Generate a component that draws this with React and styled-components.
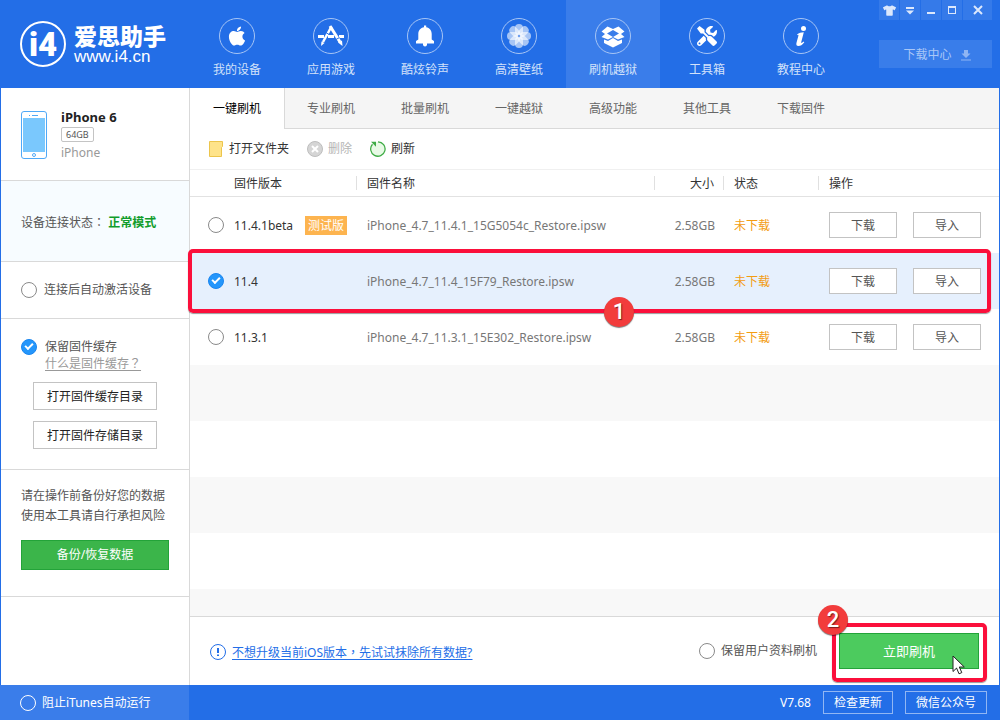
import { useState } from "react";
import styled, { createGlobalStyle } from "styled-components";
import { FaApple, FaTools, FaTshirt } from "react-icons/fa";

const GlobalStyle = createGlobalStyle`
  * {
    box-sizing: border-box;
  }

  body {
    margin: 0;
    font-family: "Noto Sans", "Noto Sans CJK SC", sans-serif;
    font-size: 12px;
    line-height: 16px;
    color: #555;
  }

  button,
  input {
    font: inherit;
    margin: 0;
  }

  button {
    padding: 0;
    cursor: pointer;
  }
`;

const Window = styled.div`
  display: flex;
  flex-direction: column;
  min-height: 100vh;
  background: #236ee7;
`;

/* header */
const Header = styled.header`
  display: flex;
  height: 88px;
`;

const Brand = styled.div`
  display: flex;
  align-items: center;
  gap: 8px;
  width: 190px;
  padding-left: 20px;
  color: #fff;
`;

const BrandName = styled.div`
  font-family: "Noto Sans CJK SC", sans-serif;
  font-size: 23px;
  font-weight: 900;
  line-height: 26px;
  white-space: nowrap;
`;

const BrandSite = styled.div`
  font-family: "Liberation Sans", sans-serif;
  font-size: 17px;
  line-height: 18px;
`;

const Nav = styled.nav`
  display: flex;
  flex: 1;
`;

const NavItem = styled.button`
  display: flex;
  flex-direction: column;
  align-items: center;
  gap: 8px;
  width: 94px;
  padding-top: 18px;
  border: none;
  background: ${(props) => (props.$active ? "#3a7dea" : "none")};
  color: #d3e2fa;
`;

const NavIcon = styled.span`
  display: flex;
  align-items: center;
  justify-content: center;
  width: 36px;
  height: 36px;
  border: 1px solid #a7c5f5;
  border-radius: 50%;
  color: #fff;
`;

const HeaderRight = styled.div`
  display: flex;
  flex-direction: column;
  gap: 20px;
  width: 113px;
  margin-right: 8px;
`;

const Controls = styled.div`
  display: flex;
  gap: 1px;
`;

const Control = styled.button`
  display: flex;
  align-items: center;
  justify-content: center;
  flex: ${(props) => (props.$wide ? "1" : "0 0 20px")};
  height: 20px;
  border: none;
  background: #357ae9;
  color: #dce8fc;
`;

const DownloadCenter = styled.button`
  display: flex;
  align-items: center;
  justify-content: center;
  gap: 8px;
  height: 28px;
  padding: 2px 0 0 4px;
  border: none;
  background: #397dea;
  color: #a9c7f7;
`;

/* sidebar */
const Body = styled.div`
  display: flex;
  flex: 1;
  padding: 0 1px;
`;

const Sidebar = styled.aside`
  display: flex;
  flex-direction: column;
  flex: 0 0 189px;
  background: #fff;
  border-right: 1px solid #d9d9d9;
`;

const Section = styled.section`
  padding: ${(props) => props.$pad || "20px"};
  border-bottom: 1px solid #d9d9d9;
  background: ${(props) => (props.$tint ? "#f7fcff" : "#fff")};
`;

const Device = styled.div`
  display: flex;
  gap: 14px;
`;

const DeviceInfo = styled.div`
  display: flex;
  flex-direction: column;
  align-items: flex-start;
  gap: 3px;
  color: #999;
`;

const DeviceName = styled.h1`
  margin: -2px 0 -1px;
  font-size: 13px;
  line-height: 16px;
  color: #222;
`;

const Capacity = styled.span`
  height: 15px;
  padding: 0 4px;
  border: 1px solid #c4c4c4;
  border-radius: 2px;
  font-size: 9px;
  line-height: 13px;
  color: #555;
`;

const Mode = styled.strong`
  color: #119c2b;
`;

/* full-width marks set in the middle of their cell */
const Punct = styled.span`
  font-family: "Noto Sans CJK TC", sans-serif;
`;

const CheckLabel = styled.label`
  display: flex;
  align-items: center;
  gap: ${(props) => props.$gap || "6px"};
  color: ${(props) => props.$color || "#555"};
`;

const RoundCheck = styled.input`
  appearance: none;
  position: relative;
  flex: none;
  width: 16px;
  height: 16px;
  border: 1px solid ${(props) => props.$line || "#8a8a8a"};
  border-radius: 50%;
  background: ${(props) => (props.$line ? "none" : "#fff")};

  &:checked {
    border-color: #1a86f0;
    background: #2496fb;
  }

  &:checked::after {
    content: "";
    box-sizing: border-box;
    position: absolute;
    left: 3px;
    top: 3px;
    width: 8px;
    height: 5px;
    border: solid #fff;
    border-width: 0 0 2px 2px;
    transform: rotate(-45deg);
  }
`;

const HelpLink = styled.a`
  display: block;
  margin-left: 24px;
  color: #999;
  text-underline-offset: 2px;
`;

const SideButtons = styled.div`
  display: flex;
  flex-direction: column;
  gap: 11px;
  margin: 10px 12px 0;
`;

const PlainButton = styled.button`
  width: ${(props) => props.$width || "auto"};
  height: ${(props) => props.$height || "26px"};
  padding-top: 2px;
  border: 1px solid #c3c3c3;
  background: #fff;
  color: ${(props) => props.$color || "#555"};
`;

const Notice = styled.p`
  margin: 0 0 14px;
  line-height: 20px;
  white-space: nowrap;
`;

const GreenButton = styled.button`
  width: ${(props) => props.$width};
  height: ${(props) => props.$height};
  border: 1px solid #23a339;
  background: ${(props) => props.$bg};
  font-size: ${(props) => props.$size || "12px"};
  color: #fff;
`;

/* main area */
const Main = styled.main`
  display: flex;
  flex-direction: column;
  flex: 1;
  min-width: 0;
  background: #fff;
`;

const Tabs = styled.div`
  display: flex;
  height: 41px;
  background: #f5f5f5;
`;

const Tab = styled.button`
  flex: 0 0 ${(props) => (props.$active ? "95px" : "94px")};
  position: relative;
  z-index: ${(props) => (props.$active ? 1 : 0)};
  margin-right: ${(props) => (props.$active ? "-1px" : "0")};
  padding-top: ${(props) => (props.$active ? "0" : "2px")};
  border: solid #d9d9d9;
  border-width: ${(props) => (props.$active ? "0 1px 0 0" : "0 0 1px")};
  background: ${(props) => (props.$active ? "#fff" : "none")};
  color: ${(props) => (props.$active ? "#000" : "#666")};
`;

const TabRest = styled.div`
  flex: 1;
  border-bottom: 1px solid #d9d9d9;
`;

const Toolbar = styled.div`
  display: flex;
  align-items: center;
  gap: 18px;
  height: 41px;
  padding-left: 18px;
  border-bottom: 1px solid #f0f0f0;
`;

const ToolButton = styled.button`
  display: flex;
  align-items: center;
  gap: 5px;
  border: none;
  background: none;
  line-height: 18px;
  color: #333;

  &:disabled {
    color: #b5b5b5;
  }
`;

const Table = styled.table`
  width: 100%;
  table-layout: fixed;
  border-spacing: 0;
`;

const Th = styled.th`
  width: ${(props) => props.$width || "auto"};
  height: 27px;
  padding: 0;
  border-bottom: 1px solid #e2e2e2;
  font-weight: normal;
  text-align: ${(props) => props.$align || "left"};
  color: #333;

  span {
    display: block;
    height: 14px;
    padding: 0 9px 0 ${(props) => props.$indent || "10px"};
    border-right: 1px solid #e0e0e0;
    line-height: 16px;
  }

  &:last-child span {
    border-right: none;
  }
`;

const Row = styled.tr`
  position: relative;
  background: ${(props) => (props.$selected ? "#e6f0fd" : "#fff")};
`;

const Td = styled.td`
  height: 56px;
  padding: ${(props) => (props.$text ? "2px" : "0")} 9px 0 10px;
  text-align: ${(props) => props.$align || "left"};
  white-space: nowrap;
  color: ${(props) => props.$color || "#777"};
`;

const Version = styled.label`
  display: flex;
  align-items: center;
  gap: 10px;
  padding-left: 8px;
  color: #333;
`;

const VersionNumber = styled.span`
  padding-top: 2px;
`;

const BetaTag = styled.span`
  height: 19px;
  margin-left: 2px;
  padding: 0 3px;
  background: #fdb44f;
  line-height: 19px;
  color: #fff;
`;

const Actions = styled.div`
  display: flex;
  gap: 16px;
`;

const Stripes = styled.div`
  flex: 1;
  background: repeating-linear-gradient(
    #f8f8f8 0 56px,
    #fff 56px 112px
  );
`;

const ActionBar = styled.div`
  display: flex;
  align-items: center;
  height: 69px;
  padding: 0 20px;
  border-top: 1px solid #d9d9d9;
`;

const EraseTip = styled.a`
  display: flex;
  align-items: center;
  gap: 6px;
  margin-right: auto;
  padding-top: 2px;
  color: #236ee7;
  text-underline-offset: 2px;
`;

const FlashNow = styled.div`
  position: relative;
  margin-left: 22px;
`;

/* walkthrough marks drawn over the window */
const Mark = styled.div`
  position: absolute;
  z-index: 2;
  inset: ${(props) => props.$inset};
  border: 4px solid #fb0f3b;
  border-radius: 5px;
  box-shadow: 0 1px 1px rgba(0, 0, 0, 0.4);
  pointer-events: none;
`;

const Step = styled.span`
  position: absolute;
  left: ${(props) => props.$left};
  top: ${(props) => props.$top};
  width: 30px;
  height: 30px;
  border-radius: 50%;
  background: #f23c3c;
  box-shadow: 0 1px 1px rgba(0, 0, 0, 0.5);
  font-family: Roboto, sans-serif;
  font-size: 22px;
  font-weight: 500;
  line-height: 30px;
  text-align: center;
  text-shadow: 1px 1px 1px rgba(0, 0, 0, 0.5);
  color: #fff;
`;

const Pointer = styled.svg`
  position: absolute;
  z-index: 3;
  left: 113px;
  top: 22px;
`;

const Footer = styled.footer`
  display: flex;
  align-items: center;
  gap: 12px;
  height: 35px;
  padding-right: 13px;
  color: #fff;
`;

const FooterLeft = styled.div`
  display: flex;
  align-items: center;
  width: 189px;
  height: 100%;
  margin-right: auto;
  padding-left: 20px;
  background: #3a7dea;
`;

const FooterButton = styled.button`
  height: 23px;
  padding: 0 10px;
  border: 1px solid #91b6f3;
  background: none;
  color: #fff;
`;

function LogoMark() {
  return (
    <svg width="46" height="46" viewBox="0 0 46 46" fill="none">
      <circle cx="23" cy="23" r="22" stroke="#fff" strokeWidth="2" />
      <text
        x="23"
        y="35"
        textAnchor="middle"
        fill="#fff"
        fontFamily="Roboto, sans-serif"
        fontWeight="900"
        fontSize="33"
      >
        i4
      </text>
    </svg>
  );
}

function AppsIcon() {
  return (
    <svg width="34" height="34" viewBox="0 0 34 34" fill="none" stroke="#fff">
      <path d="M4 17.500h6M14 17.500h6M25 17.500h5" strokeWidth="3" />
      <path d="M17.500 7.500L9 23" strokeWidth="2.500" />
      <path d="M16 7l10 16" strokeWidth="3" />
      <path d="M7.500 22.500l3 1.500-3.500 3z" fill="#fff" stroke="none" />
      <path d="M24 23.500l4-2 .5 5.500z" fill="#fff" stroke="none" />
      <path d="M12 13.500l3 2M22 20.500l3.500-2" stroke="#236ee7" />
    </svg>
  );
}

function BellIcon() {
  return (
    <svg width="34" height="34" viewBox="0 0 34 34" fill="#fff">
      <path d="M16 6.500h2.200v1.700c3.400.6 5.500 3.200 5.500 6.800v5.500l2.300 1.500v2.500H8V22l2.300-1.500V15c0-3.600 2.200-6.200 5.700-6.800z" />
      <path d="M15 24h4v1.500a2 2 0 0 1-4 0z" />
    </svg>
  );
}

function FlowerIcon() {
  const angles = [0, 45, 90, 135, 180, 225, 270, 315];
  return (
    <svg width="34" height="34" viewBox="0 0 34 34">
      {angles.map((angle) => (
        <rect
          key={angle}
          x="13"
          y="5"
          width="8"
          height="11.500"
          rx="4"
          fill="#fff"
          opacity="0.6"
          transform={`rotate(${angle} 17 17)`}
        />
      ))}
      <circle cx="17" cy="17" r="1.200" fill="#6f9fee" />
    </svg>
  );
}

function BoxIcon() {
  return (
    <svg width="34" height="34" viewBox="0 0 34 34" fill="#fff">
      <path
        fillRule="evenodd"
        d="M11.500 7.500l5.500 2.500 5.500-2.500 6 5-3.500 2.500 3.500 3-6.500 2.500-5-2.500-5 2.500L5.500 18 9 15l-3.500-2.500zM17 11l-6 3.500 6 3.500 6-3.500z"
      />
      <path d="M8 20.500l4 1.500 5-3 5 3 4-1.500V24l-9 4.500L8 24z" />
    </svg>
  );
}

function InfoIcon() {
  return (
    <svg width="34" height="34" viewBox="0 0 34 34" fill="#fff">
      <circle cx="19.500" cy="9.500" r="2.500" />
      <path d="M13 15.500c2-1.500 4-2.300 6.800-2.300l-2.600 10c-.3 1.200.6 1 2.300-.7l.8.7c-2 2.700-3.900 3.800-5.800 3.800-2 0-2.500-1.300-2-3.300l1.900-7c.3-1-.3-1-1.400-.5z" />
    </svg>
  );
}

function PhoneIcon() {
  return (
    <svg width="26" height="48" viewBox="0 0 26 48" fill="none">
      <rect x=".5" y=".5" width="25" height="47" rx="2.500" fill="#fff" stroke="#4fa9f7" />
      <rect x="2" y="7" width="22" height="34" fill="#7ac8fd" />
      <path d="M8 4.500h1M11 4.500h6" stroke="#4fa9f7" />
      <circle cx="13" cy="44" r="1.500" stroke="#4fa9f7" />
    </svg>
  );
}

function FolderIcon() {
  return (
    <svg width="16" height="16" viewBox="0 0 16 16">
      <path d="M1.500.5h13v5l-1 1v9h-12z" fill="#fee38a" stroke="#ecc54c" />
    </svg>
  );
}

function DeleteIcon() {
  return (
    <svg width="16" height="16" viewBox="0 0 16 16" fill="none">
      <circle cx="8" cy="8" r="7.500" fill="#d5d5d5" stroke="#bdbdbd" />
      <path d="M5 5l6 6M11 5l-6 6" stroke="#fff" strokeWidth="2" />
    </svg>
  );
}

function RefreshIcon() {
  return (
    <svg width="16" height="16" viewBox="0 0 16 16" fill="none">
      <circle cx="8" cy="8" r="7" fill="#e8fae6" />
      <path d="M8 .8A7.200 7.200 0 1 1 2.500 3.200" stroke="#3fac46" strokeWidth="1.300" />
      <path d="M1 .8h5v5z" fill="#3fac46" />
    </svg>
  );
}

function TipIcon() {
  return (
    <svg width="16" height="16" viewBox="0 0 16 16" fill="none" stroke="#236ee7">
      <circle cx="8" cy="8" r="7.500" />
      <path d="M8 4v5M8 10.500v1.500" strokeWidth="2" />
    </svg>
  );
}

function DownArrowIcon() {
  return (
    <svg width="12" height="12" viewBox="0 0 12 12" fill="#8fb5f3">
      <path d="M4 1h4v3.500h2.500L6 9 1.500 4.500H4zM1 10.500h10v1H1z" />
    </svg>
  );
}

const navItems = [
  { label: "我的设备", icon: <FaApple size={22} /> },
  { label: "应用游戏", icon: <AppsIcon /> },
  { label: "酷炫铃声", icon: <BellIcon /> },
  { label: "高清壁纸", icon: <FlowerIcon /> },
  { label: "刷机越狱", icon: <BoxIcon /> },
  { label: "工具箱", icon: <FaTools size={20} /> },
  { label: "教程中心", icon: <InfoIcon /> },
];

const tabs = [
  "一键刷机",
  "专业刷机",
  "批量刷机",
  "一键越狱",
  "高级功能",
  "其他工具",
  "下载固件",
];

const firmwares = [
  {
    version: "11.4.1beta",
    beta: true,
    name: "iPhone_4.7_11.4.1_15G5054c_Restore.ipsw",
    size: "2.58GB",
  },
  {
    version: "11.4",
    name: "iPhone_4.7_11.4_15F79_Restore.ipsw",
    size: "2.58GB",
  },
  {
    version: "11.3.1",
    name: "iPhone_4.7_11.3.1_15E302_Restore.ipsw",
    size: "2.58GB",
  },
];

function TopBar() {
  return (
    <Header>
      <Brand>
        <LogoMark />
        <div>
          <BrandName>爱思助手</BrandName>
          <BrandSite>www.i4.cn</BrandSite>
        </div>
      </Brand>
      <Nav>
        {navItems.map((item) => (
          <NavItem key={item.label} $active={item.label === "刷机越狱"}>
            <NavIcon>{item.icon}</NavIcon>
            {item.label}
          </NavItem>
        ))}
      </Nav>
      <HeaderRight>
        <Controls>
          <Control aria-label="皮肤">
            <FaTshirt size={13} />
          </Control>
          <Control aria-label="菜单">
            <svg width="10" height="10" viewBox="0 0 10 10" fill="currentColor">
              <path d="M1 2h8v2H1zM1 5.500h8L5 9.500z" />
            </svg>
          </Control>
          <Control aria-label="最小化">
            <svg width="10" height="10" viewBox="0 0 10 10" fill="currentColor">
              <path d="M1 7h8v2H1z" />
            </svg>
          </Control>
          <Control aria-label="最大化">
            <svg width="10" height="10" viewBox="0 0 10 10" fill="currentColor">
              <path fillRule="evenodd" d="M1 1h8v8H1zM2 3v5h6V3z" />
            </svg>
          </Control>
          <Control $wide aria-label="关闭">
            <svg width="10" height="10" viewBox="0 0 10 10" fill="none">
              <path d="M1 1l8 8M9 1L1 9" stroke="currentColor" strokeWidth="2" />
            </svg>
          </Control>
        </Controls>
        <DownloadCenter>
          下载中心
          <DownArrowIcon />
        </DownloadCenter>
      </HeaderRight>
    </Header>
  );
}

function SidePanel() {
  return (
    <Sidebar>
      <Section $pad="23px 20px 19px">
        <Device>
          <PhoneIcon />
          <DeviceInfo>
            <DeviceName>iPhone 6</DeviceName>
            <Capacity>64GB</Capacity>
            <span>iPhone</span>
          </DeviceInfo>
        </Device>
      </Section>
      <Section $tint $pad="33px 20px 30px">
        设备连接状态<Punct>：</Punct> <Mode>正常模式</Mode>
      </Section>
      <Section>
        <CheckLabel $gap="7px">
          <RoundCheck type="checkbox" />
          连接后自动激活设备
        </CheckLabel>
      </Section>
      <Section>
        <CheckLabel $gap="8px">
          <RoundCheck type="checkbox" defaultChecked />
          保留固件缓存
        </CheckLabel>
        <HelpLink href="#cache">
          什么是固件缓存<Punct>？</Punct>
        </HelpLink>
        <SideButtons>
          <PlainButton $height="28px" $color="#222">
            打开固件缓存目录
          </PlainButton>
          <PlainButton $height="28px" $color="#222">
            打开固件存储目录
          </PlainButton>
        </SideButtons>
      </Section>
      <Section $pad="16px 20px 26px">
        <Notice>
          请在操作前备份好您的数据
          <br />
          使用本工具请自行承担风险
        </Notice>
        <GreenButton $width="148px" $height="30px" $bg="#3bb54a">
          备份/恢复数据
        </GreenButton>
      </Section>
    </Sidebar>
  );
}

function FirmwareRow({ firmware, selected, onSelect }) {
  return (
    <Row $selected={selected}>
      <Td>
        <Version>
          <RoundCheck
            type="radio"
            name="firmware"
            checked={selected}
            onChange={onSelect}
          />
          <VersionNumber>{firmware.version}</VersionNumber>
          {firmware.beta && <BetaTag>测试版</BetaTag>}
        </Version>
        {selected && (
          <Mark $inset="-4px 8px -4px -2px">
            <Step $left="412px" $top="44px">
              1
            </Step>
          </Mark>
        )}
      </Td>
      <Td $text>{firmware.name}</Td>
      <Td $text $align="right">
        {firmware.size}
      </Td>
      <Td $text $color="#f39c12">
        未下载
      </Td>
      <Td>
        <Actions>
          <PlainButton $width="68px">下载</PlainButton>
          <PlainButton $width="68px">导入</PlainButton>
        </Actions>
      </Td>
    </Row>
  );
}

function App() {
  const [selected, setSelected] = useState("11.4");

  return (
    <>
      <GlobalStyle />
      <Window>
        <TopBar />
        <Body>
          <SidePanel />
          <Main>
            <Tabs>
              {tabs.map((tab, index) => (
                <Tab key={tab} $active={index === 0}>
                  {tab}
                </Tab>
              ))}
              <TabRest />
            </Tabs>
            <Toolbar>
              <ToolButton>
                <FolderIcon />
                打开文件夹
              </ToolButton>
              <ToolButton disabled>
                <DeleteIcon />
                删除
              </ToolButton>
              <ToolButton>
                <RefreshIcon />
                刷新
              </ToolButton>
            </Toolbar>
            <Table>
              <thead>
                <tr>
                  <Th $width="167px" $indent="44px">
                    <span>固件版本</span>
                  </Th>
                  <Th>
                    <span>固件名称</span>
                  </Th>
                  <Th $width="69px" $align="right">
                    <span>大小</span>
                  </Th>
                  <Th $width="95px">
                    <span>状态</span>
                  </Th>
                  <Th $width="180px">
                    <span>操作</span>
                  </Th>
                </tr>
              </thead>
              <tbody>
                {firmwares.map((firmware) => (
                  <FirmwareRow
                    key={firmware.version}
                    firmware={firmware}
                    selected={firmware.version === selected}
                    onSelect={() => setSelected(firmware.version)}
                  />
                ))}
              </tbody>
            </Table>
            <Stripes />
            <ActionBar>
              <EraseTip href="#erase">
                <TipIcon />
                <u>
                  不想升级当前iOS版本<Punct>，</Punct>先试试抹除所有数据?
                </u>
              </EraseTip>
              <CheckLabel>
                <RoundCheck type="checkbox" />
                保留用户资料刷机
              </CheckLabel>
              <FlashNow>
                <GreenButton
                  $width="140px"
                  $height="36px"
                  $bg="#4ccb5e"
                  $size="13px"
                >
                  立即刷机
                </GreenButton>
                <Mark $inset="-10px -8px -13px -7px">
                  <Step $left="-18px" $top="-22px">
                    2
                  </Step>
                </Mark>
                <Pointer width="14" height="21" viewBox="0 0 14 21">
                  <path
                    d="M1 1v15.500l3.600-3.400 2.400 5.700 2.800-1.200-2.500-5.600h5z"
                    fill="#fff"
                    stroke="#222"
                  />
                </Pointer>
              </FlashNow>
            </ActionBar>
          </Main>
        </Body>
        <Footer>
          <FooterLeft>
            <CheckLabel $color="#fff">
              <RoundCheck type="checkbox" $line="#fff" />
              阻止iTunes自动运行
            </CheckLabel>
          </FooterLeft>
          <span>V7.68</span>
          <FooterButton>检查更新</FooterButton>
          <FooterButton>微信公众号</FooterButton>
        </Footer>
      </Window>
    </>
  );
}

export default App;
